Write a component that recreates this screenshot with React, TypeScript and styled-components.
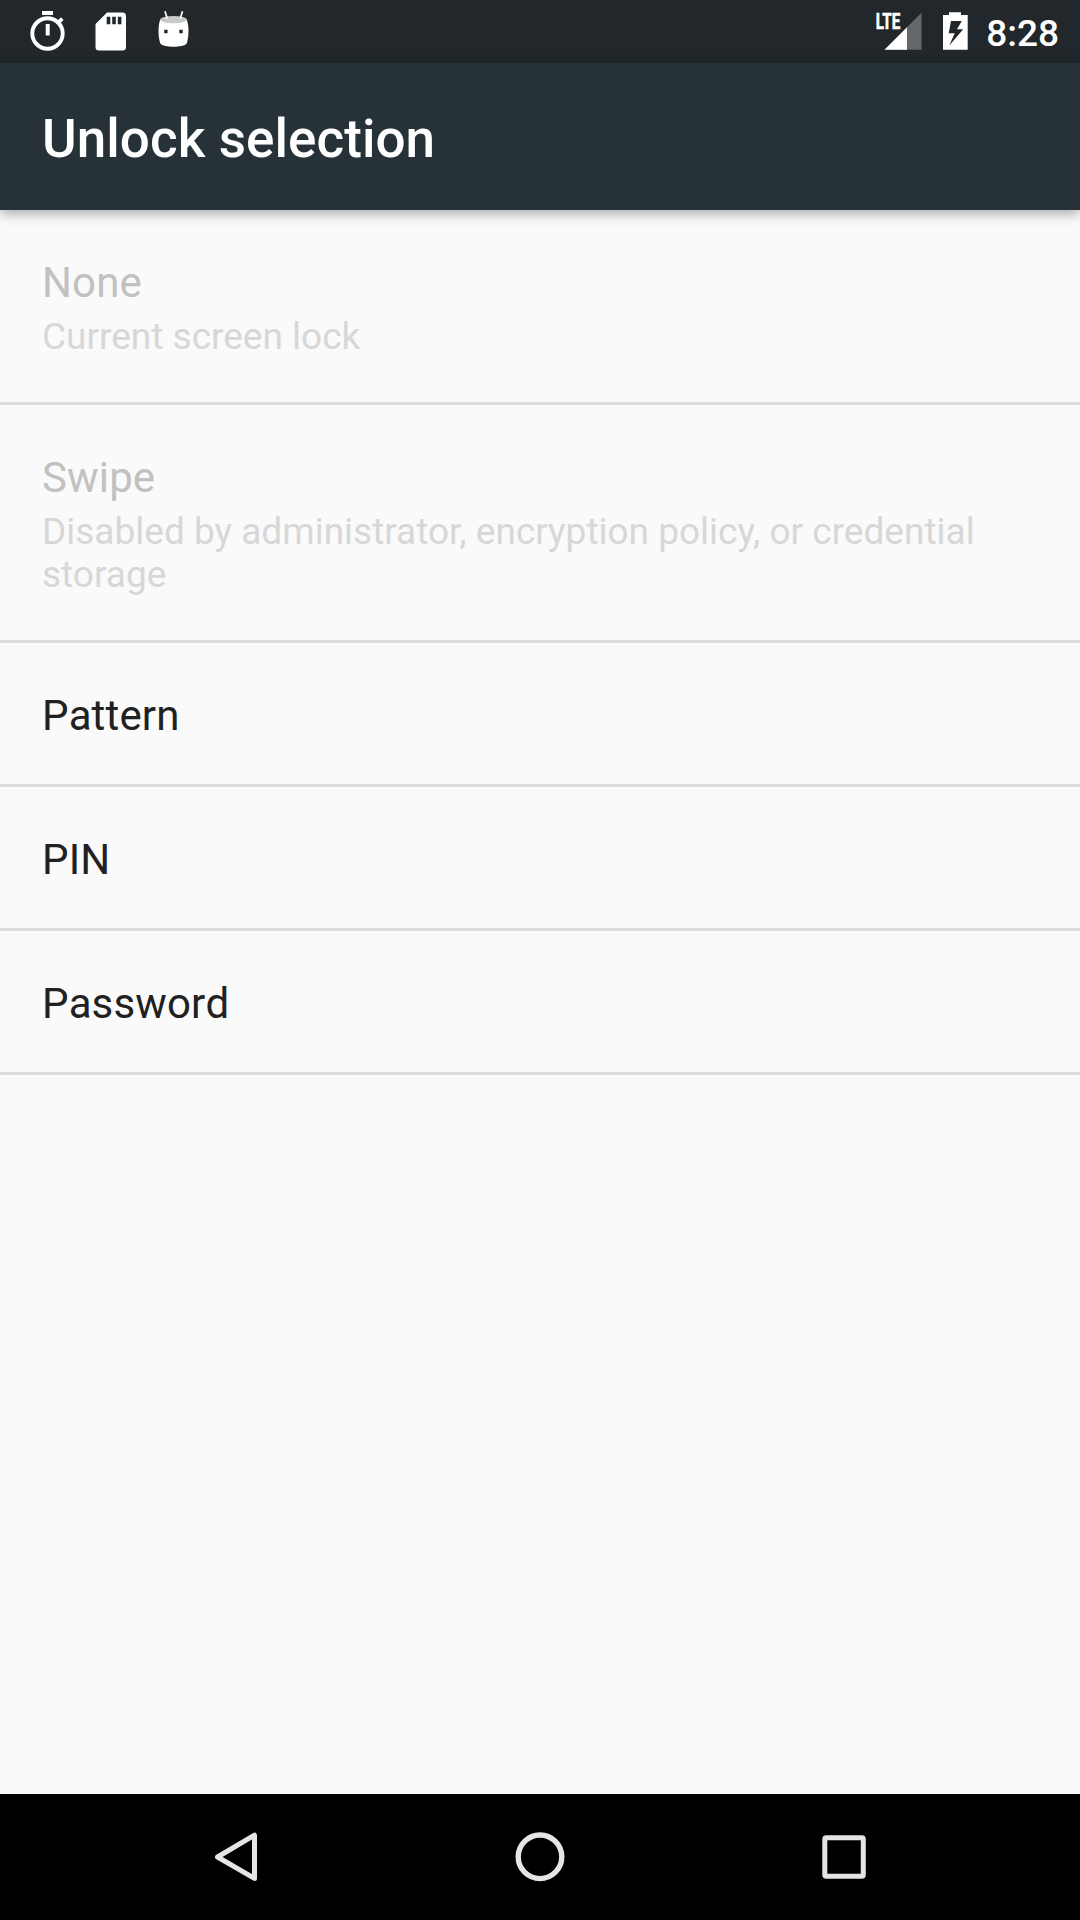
import React from "react";
import styled, { createGlobalStyle } from "styled-components";

const GlobalStyle = createGlobalStyle`
  * { box-sizing: border-box; }
  body { margin: 0; background: #fafafa; font-family: Roboto, "Noto Sans", sans-serif; }
`;

const Screen = styled.div`
  display: flex;
  flex-direction: column;
  width: 1080px;
  height: 1920px;
  background: #fafafa;
  overflow: hidden;
`;

const StatusBar = styled.header`
  display: flex;
  justify-content: space-between;
  flex: none;
  height: 63px;
  padding: 0 21px 0 16px;
  background: #21272b;
`;

const StatusGroup = styled.div`
  display: flex;
  align-items: center;
`;

const Icon = styled.svg`
  display: block;
  flex: none;
`;

const Clock = styled.span`
  margin-left: 10px;
  padding-top: 3px;
  color: #fff;
  font-size: 37px;
  font-weight: 500;
  line-height: 43px;
`;

const AppBar = styled.div`
  display: flex;
  align-items: center;
  flex: none;
  height: 147px;
  padding: 5px 42px 0;
  background: #263238;
  box-shadow: 0 3px 12px rgba(0, 0, 0, 0.36);
  z-index: 1;
`;

const Title = styled.h1`
  margin: 0;
  color: #fff;
  font-size: 53px;
  font-weight: 500;
  line-height: 62px;
  letter-spacing: 0.06px;
  font-kerning: none;
`;

const List = styled.ul`
  flex: 1;
  margin: 0;
  padding: 0;
  list-style: none;
`;

const Row = styled.li<{ $disabled?: boolean }>`
  padding: 48px 42px 44px;
  border-bottom: 3px solid #dcdcdc;
  color: ${(p) => (p.$disabled ? "#c1c1c1" : "#212121")};
`;

const RowTitle = styled.div`
  font-size: 42px;
  line-height: 49px;
  letter-spacing: 0.14px;
  font-kerning: none;
`;

const Summary = styled.div`
  margin-top: 8px;
  color: #d7d7d7;
  font-size: 37px;
  line-height: 43px;
`;

const NavBar = styled.nav`
  display: flex;
  justify-content: center;
  flex: none;
  height: 126px;
  background: #000;
`;

const NavButton = styled.button`
  display: flex;
  align-items: center;
  justify-content: center;
  width: 304px;
  height: 126px;
  padding: 0;
  border: 0;
  background: transparent;
`;

const StopwatchIcon = () => (
  <Icon width="63" height="63" viewBox="0 0 63 63">
    <path d="M26 11h11v4H26zM29.7 24h4v11.5h-4z" fill="#fff" />
    <circle cx="31.5" cy="33.5" r="15.2" fill="none" stroke="#fff" strokeWidth="3.9" />
    <path d="M42.3 22.7l4-4" stroke="#fff" strokeWidth="3.8" />
  </Icon>
);

const SdCardIcon = () => (
  <Icon width="63" height="63" viewBox="0 0 63 63">
    <path
      fillRule="evenodd"
      fill="#fff"
      d="M28 12.5h15.5q3.5 0 3.5 3.5v31q0 3.5-3.5 3.5h-23.5q-3.5 0-3.5-3.5V24zM27.7 16.7v7.5h3.6v-7.5zM33.2 16.7v7.5h3.6v-7.5zM38.8 16.7v7.5h3.6v-7.5z"
    />
  </Icon>
);

const AndroidHeadIcon = () => (
  <Icon width="63" height="63" viewBox="0 0 63 63">
    <path
      d="M18.3 19.5C16 25 15.800 35.500 18.300 43.500C20 45.700 26 46.700 31.500 46.700S43 45.700 44.700 43.500C47.200 35.500 47 25 44.700 19.500Z"
      fill="#fff"
    />
    <ellipse cx="31.5" cy="19.6" rx="13.2" ry="3.6" fill="#c8caca" />
    <path d="M25.200 18.500l-2.200-7.200M38.300 18.500l2.200-7.200" stroke="#fff" strokeWidth="1.700" />
    <path d="M22.200 29.800h3.400v3.400h-3.400zM37.300 29.800h3.400v3.400h-3.400z" fill="#22282b" />
  </Icon>
);

const SignalIcon = () => (
  <Icon width="56" height="63" viewBox="0 0 56 63">
    <path d="M46.500 12.700V49.700H9.500z" fill="#fff" fillOpacity="0.3" />
    <path d="M32 27.200V49.700H9.500z" fill="#fff" />
    <text
      x="0.8"
      y="29"
      fill="#fff"
      stroke="#fff"
      strokeWidth="0.6"
      fontFamily="Roboto, sans-serif"
      fontSize="21.5"
      fontWeight="700"
      textLength="24.5"
      lengthAdjust="spacingAndGlyphs"
    >
      LTE
    </text>
  </Icon>
);

const BatteryIcon = () => (
  <Icon width="45" height="63" viewBox="0 0 45 63">
    <path
      fillRule="evenodd"
      fill="#fff"
      d="M18 12.200h12v2.800h6.700v34.800H12V15h6zM20 21L17.700 33.200h6L18.300 45.500L32.200 29.300h-6.200L30.800 21z"
    />
  </Icon>
);

const BackIcon = () => (
  <Icon width="60" height="60" viewBox="0 0 60 60">
    <path d="M48.500 8.200V51.400L11.500 30Z" fill="none" stroke="#e5e5e5" strokeWidth="5" strokeLinejoin="round" />
  </Icon>
);

const HomeIcon = () => (
  <Icon width="60" height="60" viewBox="0 0 60 60">
    <circle cx="30" cy="29.800" r="21.800" fill="none" stroke="#e5e5e5" strokeWidth="5.400" />
  </Icon>
);

const RecentsIcon = () => (
  <Icon width="60" height="60" viewBox="0 0 60 60">
    <rect x="10.800" y="10.800" width="38.500" height="38.500" rx="1.500" fill="none" stroke="#e5e5e5" strokeWidth="5" />
  </Icon>
);

interface LockOption {
  title: string;
  summary?: string;
  disabled?: boolean;
}

const options: LockOption[] = [
  { title: "None", summary: "Current screen lock", disabled: true },
  {
    title: "Swipe",
    summary: "Disabled by administrator, encryption policy, or credential storage",
    disabled: true,
  },
  { title: "Pattern" },
  { title: "PIN" },
  { title: "Password" },
];

export default function App() {
  return (
    <Screen>
      <GlobalStyle />
      <StatusBar>
        <StatusGroup>
          <StopwatchIcon />
          <SdCardIcon />
          <AndroidHeadIcon />
        </StatusGroup>
        <StatusGroup>
          <SignalIcon />
          <BatteryIcon />
          <Clock>8:28</Clock>
        </StatusGroup>
      </StatusBar>
      <AppBar>
        <Title>Unlock selection</Title>
      </AppBar>
      <List>
        {options.map((o) => (
          <Row key={o.title} $disabled={o.disabled}>
            <RowTitle>{o.title}</RowTitle>
            {o.summary && <Summary>{o.summary}</Summary>}
          </Row>
        ))}
      </List>
      <NavBar>
        <NavButton aria-label="Back">
          <BackIcon />
        </NavButton>
        <NavButton aria-label="Home">
          <HomeIcon />
        </NavButton>
        <NavButton aria-label="Recents">
          <RecentsIcon />
        </NavButton>
      </NavBar>
    </Screen>
  );
}
